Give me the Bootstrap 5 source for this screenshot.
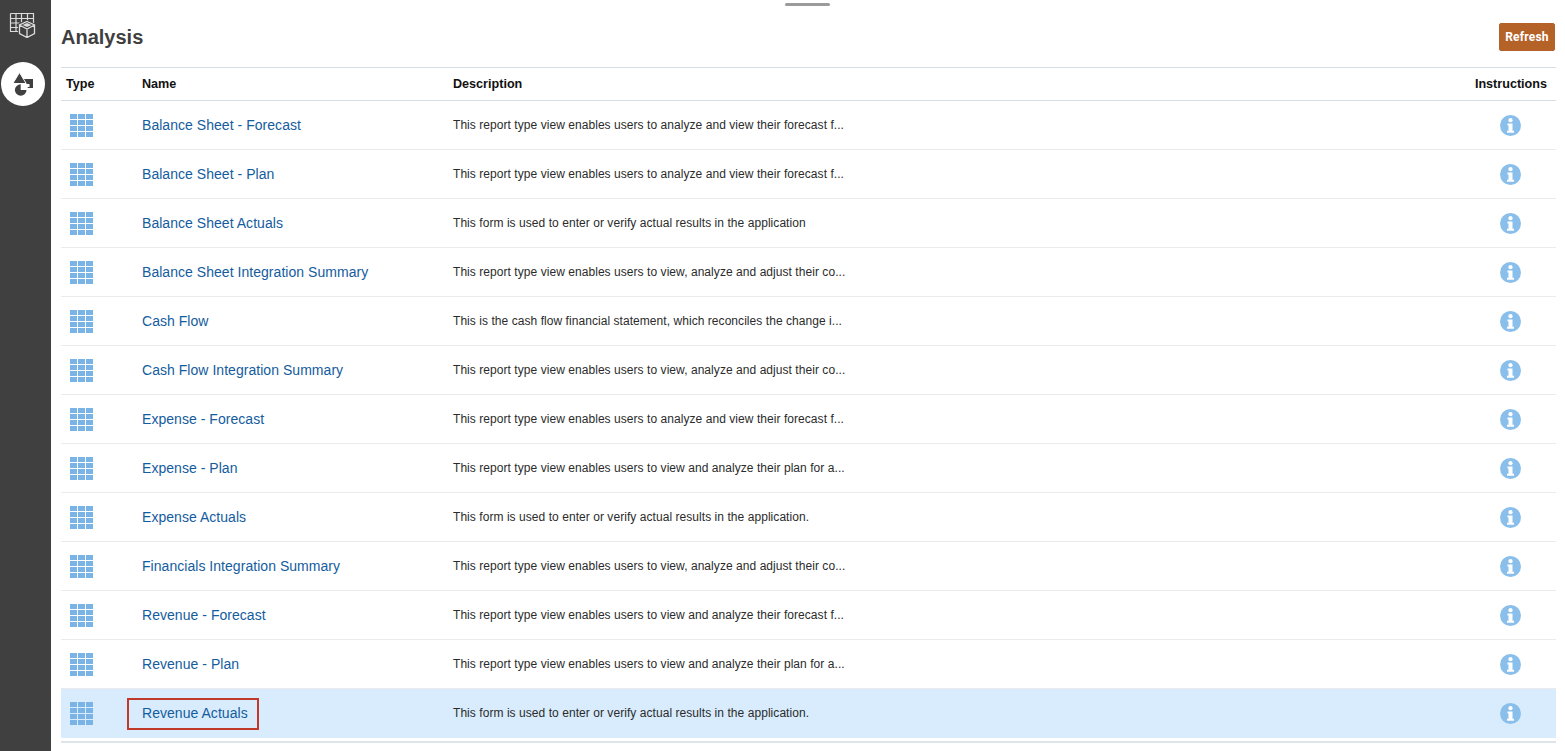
<!DOCTYPE html>
<html lang="en">
<head>
<meta charset="utf-8">
<title>Analysis</title>
<link href="https://cdn.jsdelivr.net/npm/bootstrap@5.3.0/dist/css/bootstrap.min.css" rel="stylesheet">
<style>
html,body{height:100%;overflow:hidden}
body{font-family:"Liberation Sans",Arial,sans-serif;background:#fff;color:#222}
.shell{height:751px}
.rail{width:51px;background:#404040;flex:none}
.rail-top{height:50px;padding:12px 0 0 9px}
.rail-circle{width:44px;height:44px;border-radius:50%;background:#fff;margin:12px 0 0 1px}
.main-pane{flex:1;min-width:0;padding:0 9px 0 10px;position:relative}
.grip{position:absolute;top:3px;left:734px;width:45px;height:3px;border-radius:2px;background:#9b9b9b}
.head-row{height:67px;padding-top:23px}
.page-title{font-size:20px;font-weight:700;color:#3f3f3f;line-height:28px;margin:0}
.btn-refresh{width:56px;height:28px;padding:0;margin-right:1px;font-size:12px;letter-spacing:.2px;font-weight:700;line-height:26px;color:#fff;background:#b56229;border:1px solid #b56229;border-radius:2px;font-family:Roboto,"Liberation Sans",sans-serif}
.btn-refresh:hover{background:#b56229;color:#fff;border-color:#b56229}
.report-table{table-layout:fixed;width:1495px;margin:0;border-collapse:separate;border-spacing:0;border-bottom:2px solid #dfe4ea}
.report-table th,.report-table td{padding:0 5px;vertical-align:middle;box-shadow:none;background:transparent;color:inherit}
.report-table thead th{height:34px;padding-top:1px;font-size:12.6px;font-weight:700;color:#111;border-top:1px solid #d6dde6;border-bottom:1px solid #d6dde6}
.report-table tbody td{height:49px;font-size:12px;letter-spacing:.055px;color:#2b2b2b;border-bottom:1px solid #ebebeb}
.report-table tbody td svg{display:block}
.report-table tbody tr:last-child td{border-bottom:3px solid #fff;height:52px;padding-bottom:1px}
.report-table tbody tr.picked td{background:#d8ecfd;background-clip:padding-box}
.col-type{width:76px}.col-name{width:311px}.col-instr{width:96px}
.th-instr{text-align:right;padding-right:9px!important}
.report-link{color:#145c9e;font-size:14px;letter-spacing:.04px;text-decoration:none}
.report-link:hover{color:#145c9e}
.outlined{display:inline-block;border:2px solid #c0392b;width:132px;height:32px;line-height:27px;margin:2px 0 0 -15px;padding-left:13px;vertical-align:middle}
.grid-ic{margin-left:4px}
.info-ic{margin-left:auto;margin-right:30px}
</style>
</head>
<body>
<div class="d-flex shell">
  <nav class="rail">
    <div class="rail-top">
      <svg width="27" height="26" viewBox="0 0 27 26" fill="none" stroke="#dcdcdc" stroke-width="1.200">
        <path d="M1.500 1.500h23v18H10M1.500 1.500v18H10M1.500 6.500h23M1.500 11h9M1.500 15.500h9M7 1.500v18M12.500 1.500v9M18.500 1.500v7"/>
        <path d="M18 9.500l7.500 3.500v8.500L18 25.500l-7.500-4V13z" fill="#404040" stroke="#404040" stroke-width="3"/>
        <path d="M18 9.500l7.500 3.500v8.500L18 25.500l-7.500-4V13zM10.500 13l7.500 4 7.500-4M18 17v8.500" stroke-width="1.300"/>
        <path d="M18 11l4.500 2L18 15l-4.500-2z" fill="#dcdcdc" stroke="none"/>
      </svg>
    </div>
    <div class="rail-circle d-flex align-items-center justify-content-center">
      <svg width="24" height="24" viewBox="0 0 24 24">
        <rect x="12" y="7" width="10" height="9" fill="#404040"/>
        <rect x="11" y="12" width="7.500" height="3" fill="#fff"/>
        <path fill="#404040" stroke="#fff" stroke-width="1" d="M8.500.5l6.700 11H1.800z"/>
        <circle cx="9.700" cy="18" r="5.800" fill="#404040"/>
        <path fill="#fff" d="M9.700 12h7v6h-7z"/>
      </svg>
    </div>
  </nav>
  <main class="main-pane">
    <div class="grip"></div>
    <div class="head-row d-flex justify-content-between align-items-start">
      <h1 class="page-title">Analysis</h1>
      <button type="button" class="btn btn-refresh">Refresh</button>
    </div>
    <table class="table report-table">
      <colgroup><col class="col-type"><col class="col-name"><col><col class="col-instr"></colgroup>
      <thead><tr><th>Type</th><th>Name</th><th>Description</th><th class="th-instr">Instructions</th></tr></thead>
      <tbody id="rows"></tbody>
    </table>
  </main>
</div>
<svg width="0" height="0" class="position-absolute">
  <symbol id="ic-grid" viewBox="0 0 23 23">
    <g fill="#7ab4e6">
      <rect x="0" y="0" width="7" height="5"/><rect x="8" y="0" width="7" height="5"/><rect x="16" y="0" width="7" height="5"/>
      <rect x="0" y="6" width="7" height="5"/><rect x="8" y="6" width="7" height="5"/><rect x="16" y="6" width="7" height="5"/>
      <rect x="0" y="12" width="7" height="5"/><rect x="8" y="12" width="7" height="5"/><rect x="16" y="12" width="7" height="5"/>
      <rect x="0" y="18" width="7" height="5"/><rect x="8" y="18" width="7" height="5"/><rect x="16" y="18" width="7" height="5"/>
    </g>
  </symbol>
  <symbol id="ic-info" viewBox="0 0 21 21">
    <circle cx="10.500" cy="10.500" r="10.500" fill="#8abfeb"/>
    <circle cx="10.500" cy="5.200" r="2.100" fill="#fff"/>
    <path fill="#fff" d="M7.500 8.500h5v7.200h1.500v2H7v-2h1.500v-5.200h-1z"/>
  </symbol>
</svg>
<script>
var data=[
["Balance Sheet - Forecast","This report type view enables users to analyze and view their forecast f..."],
["Balance Sheet - Plan","This report type view enables users to analyze and view their forecast f..."],
["Balance Sheet Actuals","This form is used to enter or verify actual results in the application"],
["Balance Sheet Integration Summary","This report type view enables users to view, analyze and adjust their co..."],
["Cash Flow","This is the cash flow financial statement, which reconciles the change i..."],
["Cash Flow Integration Summary","This report type view enables users to view, analyze and adjust their co..."],
["Expense - Forecast","This report type view enables users to analyze and view their forecast f..."],
["Expense - Plan","This report type view enables users to view and analyze their plan for a..."],
["Expense Actuals","This form is used to enter or verify actual results in the application."],
["Financials Integration Summary","This report type view enables users to view, analyze and adjust their co..."],
["Revenue - Forecast","This report type view enables users to view and analyze their forecast f..."],
["Revenue - Plan","This report type view enables users to view and analyze their plan for a..."],
["Revenue Actuals","This form is used to enter or verify actual results in the application."]];
document.getElementById('rows').innerHTML=data.map(function(d,i){
 var last=i===data.length-1;
 return '<tr'+(last?' class="picked"':'')+'><td><svg class="grid-ic" width="23" height="23"><use href="#ic-grid"/></svg></td>'+
 '<td><a href="#" class="report-link'+(last?' outlined':'')+'">'+d[0]+'</a></td><td>'+d[1]+'</td>'+
 '<td><svg class="info-ic" width="21" height="21"><use href="#ic-info"/></svg></td></tr>';
}).join('');
</script>
<script src="https://cdn.jsdelivr.net/npm/bootstrap@5.3.0/dist/js/bootstrap.bundle.min.js"></script>
</body>
</html>
